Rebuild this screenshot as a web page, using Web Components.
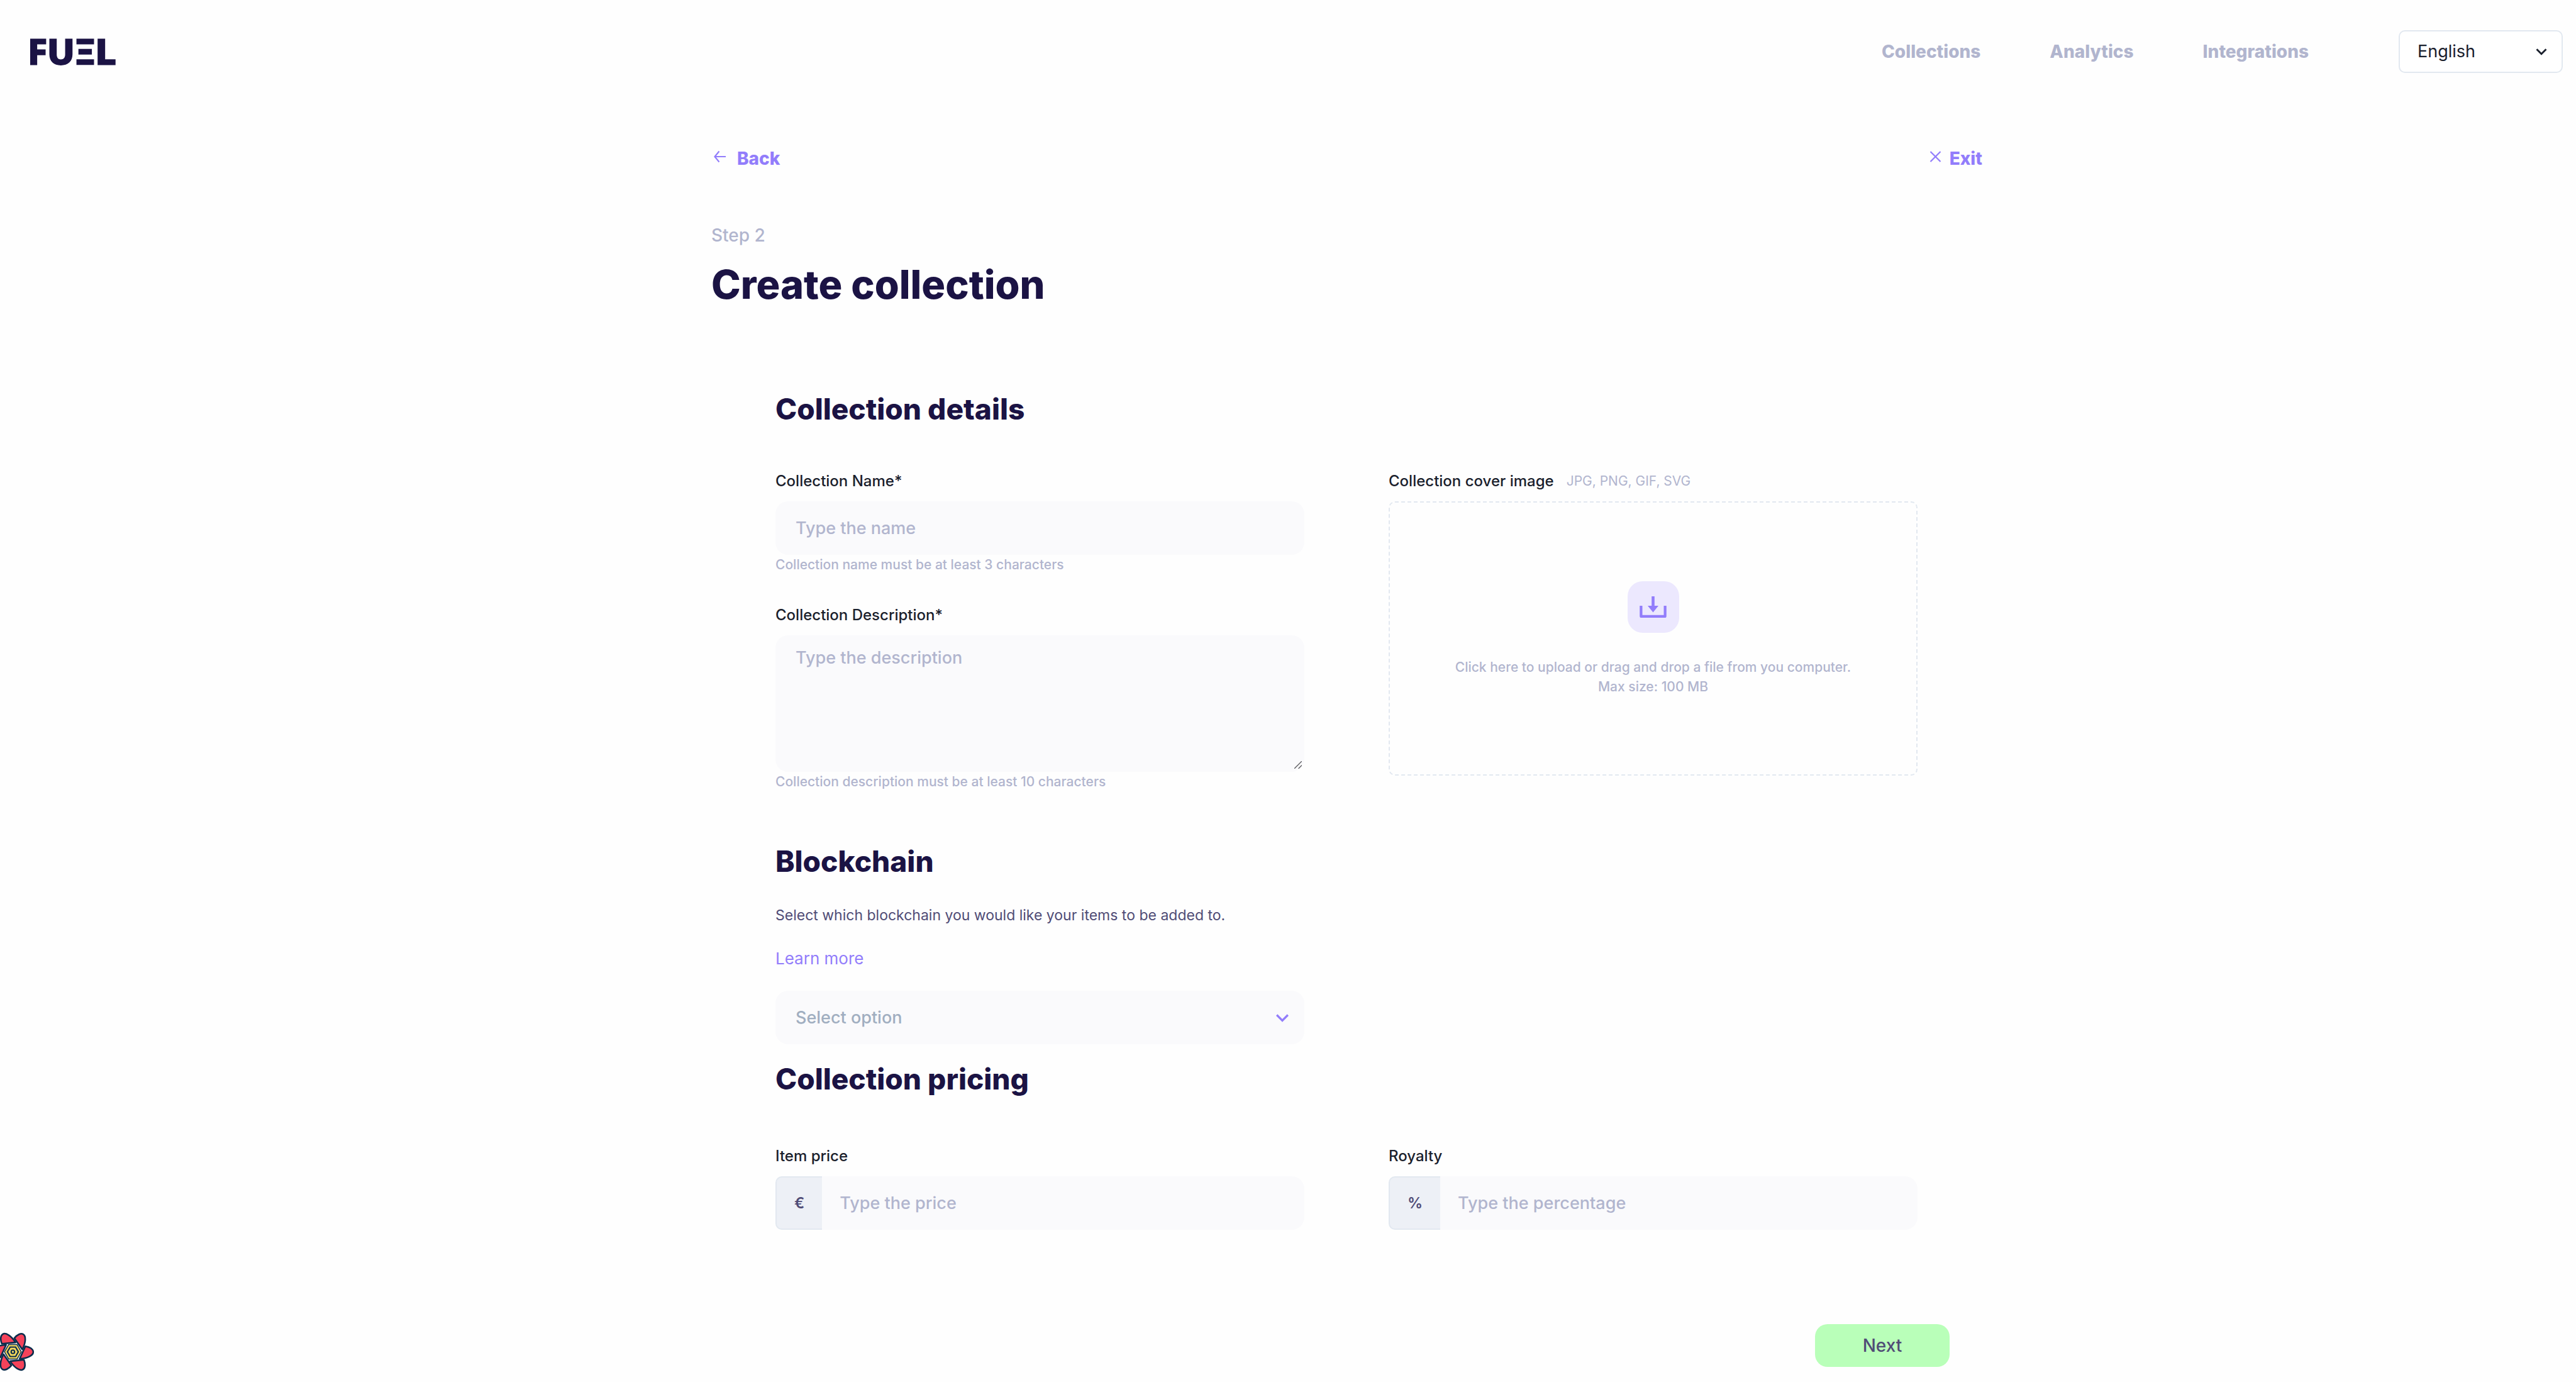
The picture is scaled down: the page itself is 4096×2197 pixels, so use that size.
<!DOCTYPE html>
<html lang="en">
<head>
<meta charset="utf-8">
<title>Create collection</title>
<style>
:root{--ink:#1b1344;--label:#1a202c;--body:#504c76;--muted:#b1b5ce;--accent:#927dfb;--field:#fafafc;--line:#e2e8f0;--radius:20px}
body{margin:0;background:#fefefe;color:var(--label);font:400 27px/32px Inter,"Liberation Sans",sans-serif;font-optical-sizing:none}
</style>
</head>
<body>
<fuel-page></fuel-page>
<script>
const base = `<style>
*{box-sizing:border-box}
input,textarea,select,button{font:inherit;color:inherit;font-optical-sizing:none;margin:0;border:0;outline:0}
a{color:inherit;text-decoration:none}
h1,h2,p{margin:0}
</style>`;
const define = (name, html) => customElements.define(name, class extends HTMLElement {
  connectedCallback() {
    if (this.shadowRoot) return;
    this.attachShadow({mode: 'open'}).innerHTML = base + (typeof html === 'function' ? html(this) : html);
  }
});

define('fuel-logo', `<style>:host{display:block}svg{display:block;width:136px;height:43px}</style>
<svg viewBox="168 212 477 150" role="img" aria-label="Fuel" fill="#1b1344"><path d="M168 213h89v32h-50v28h47v32h-47v56h-39zM275 213h41v88c0 19 9 28 23 28s24-9 24-28v-88h41v88c0 38-25 61-65 61s-64-23-64-61zM426 213h98v32h-98zM437 270h75v32h-75zM426 328h98v32h-98zM544 213h42v115h58v33H544z"/></svg>`);

define('fuel-chevron', `<style>:host{display:block;width:34px;height:34px}svg{display:block;width:100%;height:100%}</style>
<svg viewBox="0 0 24 24" fill="currentColor" aria-hidden="true"><path d="M16.59 8.59 12 13.17 7.41 8.59 6 10l6 6 6-6z"/></svg>`);

define('fuel-header', `<style>
:host{display:flex;align-items:center;padding:48px 21px 0 48px}
nav{display:flex;gap:110px;margin:0 143px 0 auto;font-size:28px;font-weight:800;color:var(--muted)}
.lang{display:grid;width:261px;align-items:center}
.lang>*{grid-area:1/1}
select{appearance:none;width:100%;height:68px;padding:0 28px;border:2px solid var(--line);border-radius:10px;background:#fff;color:var(--label)}
fuel-chevron{justify-self:end;margin-right:17px;pointer-events:none}
</style>
<fuel-logo></fuel-logo>
<nav><a href="#collections">Collections</a><a href="#analytics">Analytics</a><a href="#integrations">Integrations</a></nav>
<div class="lang"><select aria-label="Language"><option>English</option></select><fuel-chevron></fuel-chevron></div>`);

define('fuel-toolbar', `<style>
:host{display:flex;justify-content:space-between;font-size:28px;font-weight:800;color:var(--accent)}
a{display:flex;align-items:center}
.back{gap:14px}.exit{gap:9px}
svg{width:27px;height:32px;fill:none;stroke:currentColor;stroke-width:2.2}
</style>
<a class="back" href="#back"><svg viewBox="0 0 27 32" aria-hidden="true"><path d="M23 13H5.500M12.500 4.500 5.500 13l7 8.500"/></svg>Back</a>
<a class="exit" href="#exit"><svg viewBox="0 0 27 32" aria-hidden="true"><path d="m5.500 5 16 16m0-16-16 16"/></svg>Exit</a>`);

define('fuel-section', el => `<style>
:host{display:block}
h2{font-size:46px;line-height:60px;font-weight:800;color:var(--ink)}
</style><section><h2>${el.getAttribute('heading')}</h2><slot></slot></section>`);

define('fuel-field', el => {
  const a = n => el.getAttribute(n);
  const prefix = a('prefix');
  const control = el.hasAttribute('multiline')
    ? `<textarea id="c" placeholder="${a('placeholder')}"></textarea><svg class="grip" viewBox="0 0 12 12" aria-hidden="true"><path d="M0 12 12 0M6.500 12 12 6.500"/></svg>`
    : `<input id="c" type="text" placeholder="${a('placeholder')}">`;
  return `<style>
:host{display:block}
label{display:block;margin-bottom:16px;font-size:24px;font-weight:500;color:var(--label)}
.row{display:flex;position:relative}
input,textarea{display:block;flex:1;min-width:0;height:85px;padding:0 32px;border-radius:var(--radius);background:var(--field);font-weight:500}
textarea{height:217px;padding:20px 32px;resize:vertical}
textarea::-webkit-resizer{background:transparent}
.grip{position:absolute;right:4px;bottom:5px;width:12px;height:12px;stroke:#5f5f63;stroke-width:1.400;pointer-events:none}
::placeholder{color:var(--muted);opacity:1}
.prefix{display:flex;align-items:center;padding:0 28px;border:2px solid var(--line);border-right:0;border-radius:10px 0 0 10px;background:#edf0f6;color:var(--body);font-size:24px;font-weight:600}
.prefix+input{padding-left:28px;border-radius:0 var(--radius) var(--radius) 0}
p{margin-top:4px;font-size:21px;line-height:24px;font-weight:500;color:var(--muted)}
</style>
<label for="c">${a('label')}</label>
<div class="row">${prefix ? `<span class="prefix">${prefix}</span>` : ''}${control}</div>
${a('hint') ? `<p>${a('hint')}</p>` : ''}`;
});

define('fuel-upload', `<style>
:host{display:block}
.head{display:flex;align-items:center;gap:20px;margin-bottom:16px;font-size:24px;font-weight:500;color:var(--label)}
small{font-size:21px;font-weight:400;color:var(--muted)}
.drop{position:relative;display:flex;flex-direction:column;align-items:center;justify-content:center;gap:39px;height:436px;border:2px dashed var(--line);border-radius:10px}
.icon{display:grid;place-items:center;width:82px;height:82px;border-radius:24px;background:#ece8fe;color:var(--accent)}
svg{width:43px;height:34px}
p{font-size:21px;line-height:31px;font-weight:500;text-align:center;color:var(--muted)}
input{position:absolute;inset:0;width:100%;height:100%;opacity:0}
</style>
<div class="head"><label for="f">Collection cover image</label><small>JPG, PNG, GIF, SVG</small></div>
<div class="drop"><span class="icon"><svg viewBox="0 0 50 40" fill="currentColor" aria-hidden="true"><path d="M22.300 0h5.400v17.500H35L25 30 15 17.500h7.300zM0 17.500h5V35h40V17.500h5V37q0 3-3 3H3q-3 0-3-3z"/></svg></span>
<p>Click here to upload or drag and drop a file from you computer.<br>Max size: 100 MB</p><input id="f" type="file"></div>`);

define('fuel-chain', `<style>
:host{display:block}
.text{margin-top:40px;font-size:23px;color:var(--body)}
.more{margin-top:37px;font-size:26px;color:var(--accent)}
.pick{display:grid;align-items:center;margin-top:35px}
.pick>*{grid-area:1/1}
select{appearance:none;width:100%;height:85px;padding:0 32px;border-radius:var(--radius);background:var(--field);color:#a0aec0;font-weight:500}
fuel-chevron{justify-self:end;width:40px;height:40px;margin-right:15px;color:var(--accent);pointer-events:none}
</style>
<p class="text">Select which blockchain you would like your items to be added to.</p>
<p class="more"><a href="#learn">Learn more</a></p>
<div class="pick"><select aria-label="Blockchain"><option>Select option</option></select><fuel-chevron></fuel-chevron></div>`);

define('query-badge', () => {
  const petals = [0, 60, 120, 180, 240, 300].map(d =>
    `<path transform="rotate(${d})" d="M70-31C96-27 114-14 114 1 114 19 84 37 38 39z"/>`).join('');
  const hex = (r, c) => `<path fill="${c}" d="M${r} 0L${r/2} ${r*.866}H${-r/2}L${-r} 0L${-r/2} ${-r*.866}H${r/2}z"/>`;
  return `<style>:host{position:fixed;left:0;bottom:17px}button{display:block;padding:0;background:none}svg{display:block;width:54px;height:62px}</style>
<button aria-label="Open query devtools"><svg viewBox="-72 -109 190 218"><g fill="#f5425a" stroke="#0b2c4b" stroke-width="9" stroke-linejoin="round">${petals}</g>${hex(50,'#0b2c4b')}${hex(44,'#f5d85c')}${hex(35,'#0b2c4b')}${hex(26,'#f5d85c')}<circle r="13.500" fill="#0b2c4b"/><circle r="6" fill="#f5d85c"/></svg></button>`;
});

define('fuel-page', `<style>
:host{display:block}
main{padding:120px 0 24px 187px}
.wrap{max-width:2021px;margin:0 auto}
.step{margin-top:90px;font-weight:500;font-size:28px;color:var(--muted)}
h1{margin-top:22px;font-size:63px;line-height:80px;font-weight:800;color:var(--ink)}
form{padding:128px 103px 0 102px}
.cols{display:grid;grid-template-columns:1fr 1fr;gap:134px;margin-top:69px}
.stack{display:flex;flex-direction:column;gap:52px}
.chain{margin-top:84px}
.chain fuel-chain{width:calc(50% - 67px)}
.price{margin-top:25px}
.price .cols{margin-top:77px}
.actions{display:flex;justify-content:flex-end;margin-top:150px;padding-right:52px}
button{width:214px;height:68px;border-radius:var(--radius);background:#b9ffb9;color:var(--body);font-size:28px;font-weight:500}
</style>
<fuel-header></fuel-header>
<main><div class="wrap">
<fuel-toolbar></fuel-toolbar>
<p class="step">Step 2</p>
<h1>Create collection</h1>
<form>
<fuel-section heading="Collection details"><div class="cols">
<div class="stack">
<fuel-field label="Collection Name*" placeholder="Type the name" hint="Collection name must be at least 3 characters"></fuel-field>
<fuel-field multiline label="Collection Description*" placeholder="Type the description" hint="Collection description must be at least 10 characters"></fuel-field>
</div>
<fuel-upload></fuel-upload>
</div></fuel-section>
<fuel-section class="chain" heading="Blockchain"><fuel-chain></fuel-chain></fuel-section>
<fuel-section class="price" heading="Collection pricing"><div class="cols">
<fuel-field prefix="€" label="Item price" placeholder="Type the price"></fuel-field>
<fuel-field prefix="%" label="Royalty" placeholder="Type the percentage"></fuel-field>
</div></fuel-section>
</form>
<div class="actions"><button type="button">Next</button></div>
</div></main>
<query-badge></query-badge>`);
</script>
</body>
</html>
